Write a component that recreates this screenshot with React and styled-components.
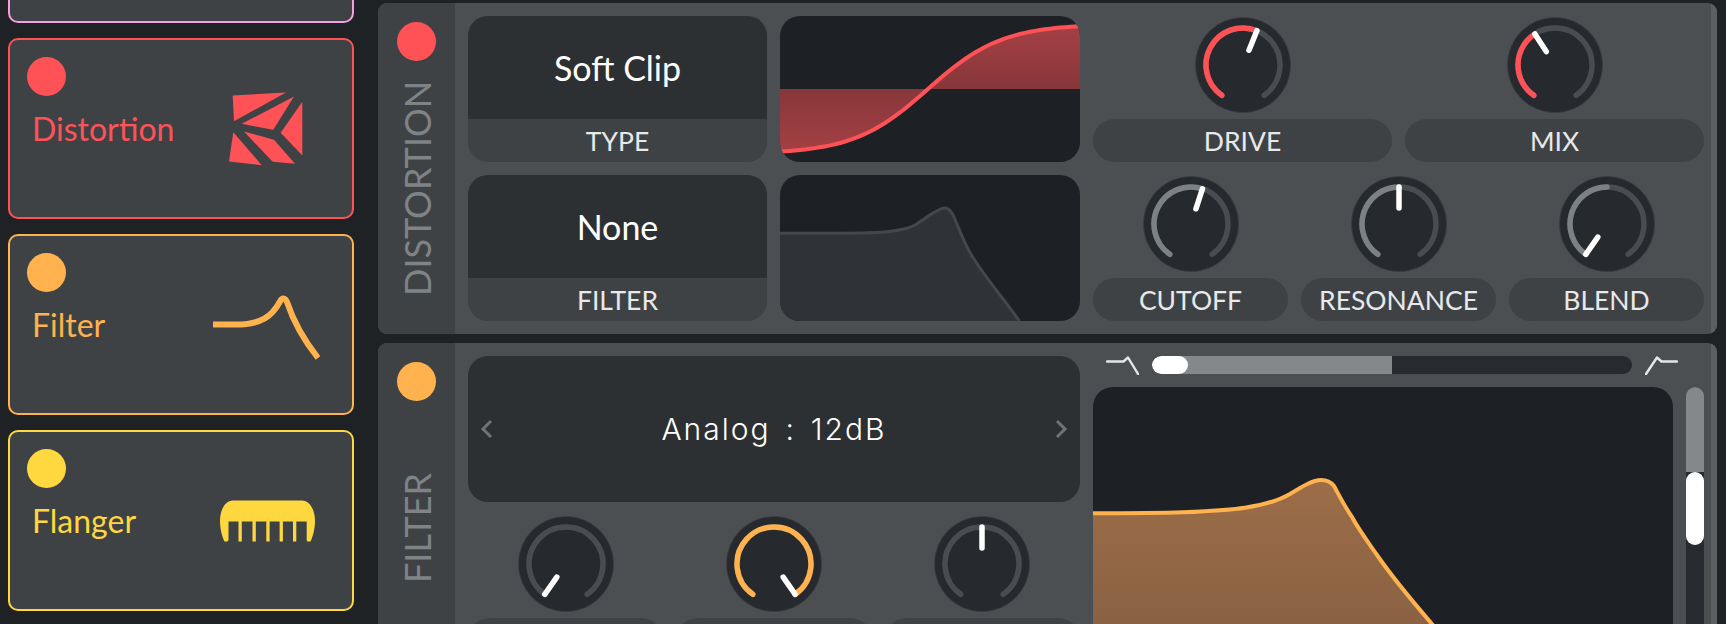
import React from "react";
import styled, { createGlobalStyle } from "styled-components";

const RED = "#ff5257";
const ORANGE = "#ffb24d";
const YELLOW = "#ffd73f";
const PINK = "#f29fe2";

const Global = createGlobalStyle`
  html, body { margin: 0; padding: 0; height: 100%; overflow: hidden; background: #1f2225; }
  #root { height: 100%; }
  * { box-sizing: border-box; }
`;

const Page = styled.div`
  display: flex;
  width: 1726px;
  height: 624px;
  overflow: hidden;
  background: #1f2225;
  font-family: Lato, "Liberation Sans", sans-serif;
  font-weight: 400;
`;

const Sidebar = styled.aside`
  flex: 0 0 378px;
  height: 624px;
  padding: 0 24px 13px 8px;
  display: flex;
  flex-direction: column;
  justify-content: flex-end;
  gap: 15px;
  overflow: hidden;
`;

const EffectCard = styled.div`
  flex: 0 0 181px;
  display: flex;
  border: 2px solid ${(p) => p.$color};
  border-radius: 10px;
  background: #3f4245;
  color: ${(p) => p.$color};
`;

const CardInfo = styled.div`
  flex: 0 0 170px;
  padding: 17px 0 0 17px;
`;

const Dot = styled.div`
  width: 39px;
  height: 39px;
  border-radius: 50%;
  background: ${(p) => p.$color};
`;

const CardName = styled.div`
  margin: 11px 0 0 5px;
  font-size: 32px;
  line-height: 44px;
`;

const CardIcon = styled.div`
  flex: 1;
  display: flex;
  align-items: center;
  justify-content: center;
`;

const Main = styled.main`
  flex: 1;
  padding: 3px 9px 0 0;
  display: flex;
  flex-direction: column;
  gap: 9px;
  min-width: 0;
`;

const Panel = styled.section`
  flex: 0 0 auto;
  display: flex;
  border-radius: 9px;
  overflow: hidden;
  background: #4b4f52;
`;

const Strip = styled.div`
  flex: 0 0 77px;
  background: #3f4245;
  display: flex;
  flex-direction: column;
  align-items: center;
  padding: 19px 0 19px;
`;

const StripTitle = styled.div`
  flex: 1;
  display: flex;
  align-items: center;
  justify-content: center;
  writing-mode: vertical-rl;
  transform: rotate(180deg);
  font-size: 36px;
  line-height: 40px;
  color: #7e8386;
`;

const PanelBody = styled.div`
  flex: 1;
  min-width: 0;
  padding: 13px 6px 13px 13px;
  display: grid;
  grid-template-columns: 612px 611px;
  gap: 13px;
`;

const PanelEdge = styled.div`
  flex: 0 0 6px;
  background: #5b5f62;
`;

const SplitRow = styled.div`
  display: grid;
  grid-template-columns: 299px 300px;
  gap: 13px;
  height: 146px;
`;

const KnobRow = styled.div`
  display: grid;
  grid-template-columns: repeat(${(p) => p.$cols}, minmax(0, 1fr));
  gap: 13px;
  height: 146px;
`;

const Selector = styled.div`
  height: 146px;
  border-radius: 20px;
  overflow: hidden;
  display: flex;
  flex-direction: column;
  background: #3f4245;
`;

const SelectorValue = styled.div`
  flex: 0 0 103px;
  background: #2d3033;
  display: flex;
  align-items: center;
  justify-content: center;
  color: #fff;
  font-size: 34px;
`;

const SelectorLabel = styled.div`
  flex: 1;
  display: flex;
  align-items: center;
  justify-content: center;
  color: #e8e9ea;
  font-size: 26.5px;
`;

const GraphBox = styled.div`
  height: ${(p) => p.$height || "146px"};
  border-radius: 20px;
  overflow: hidden;
  background: #1d2024;
  & > svg { display: block; width: 100%; height: 100%; }
`;

const BrowseBar = styled.div`
  height: 146px;
  border-radius: 20px;
  background: #2d3033;
  display: flex;
  align-items: center;
  justify-content: space-between;
  padding: 0 12px;
`;

const BrowseText = styled.div`
  color: #fff;
  font-family: Inter, sans-serif;
  font-weight: 300;
  font-size: 30px;
  letter-spacing: 2px;
  word-spacing: -3px;
  white-space: pre;
`;

const KnobCell = styled.div`
  display: flex;
  flex-direction: column;
  align-items: center;
  padding-top: 1px;
  gap: 6px;
  min-width: 0;
`;

const KnobSvg = styled.svg`
  display: block;
  flex: 0 0 96px;
`;

const KnobLabel = styled.div`
  align-self: stretch;
  flex: 0 0 43px;
  border-radius: 22px;
  background: #3f4245;
  display: flex;
  align-items: center;
  justify-content: center;
  color: #e8e9ea;
  font-size: 26.5px;
`;

const Column = styled.div`
  display: flex;
  flex-direction: column;
  gap: 13px;
  min-width: 0;
`;

const ToneRow = styled.div`
  display: flex;
  align-items: center;
  gap: 13px;
  height: 18px;
  padding: 0 26px 0 13px;
`;

const HTrack = styled.div`
  flex: 1;
  height: 18px;
  border-radius: 9px;
  overflow: hidden;
  background: #272a2e;
`;

const HFill = styled.div`
  height: 100%;
  background: #84888b;
`;

const HHandle = styled.div`
  width: 36px;
  height: 18px;
  border-radius: 9px;
  background: #fff;
`;

const GraphRow = styled.div`
  display: grid;
  grid-template-columns: 1fr 18px;
  gap: 13px;
`;

const VTrack = styled.div`
  height: 274px;
  border-radius: 9px;
  overflow: hidden;
  background: #272a2e;
`;

const VFill = styled.div`
  height: 85px;
  background: #84888b;
`;

const VHandle = styled.div`
  height: 73px;
  border-radius: 9px;
  background: #fff;
`;

const polar = (r, deg) => {
  const a = (deg * Math.PI) / 180;
  return [48 + r * Math.sin(a), 48 - r * Math.cos(a)];
};

const arc = (from, to, r = 37) => {
  const [x1, y1] = polar(r, from);
  const [x2, y2] = polar(r, to);
  const large = to - from > 180 ? 1 : 0;
  return `M${x1.toFixed(2)} ${y1.toFixed(2)}A${r} ${r} 0 ${large} 1 ${x2.toFixed(2)} ${y2.toFixed(2)}`;
};

function Knob({ angle, from = -145, to, color = "#7c8184", label }) {
  const [ix, iy] = polar(16, angle);
  const [ox, oy] = polar(37, angle);
  return (
    <KnobCell>
      <KnobSvg width="96" height="96" viewBox="0 0 96 96">
        <circle cx="48" cy="48" r="47.6" fill="#26292d" stroke="#3d4043" strokeWidth="0.8" />
        <path d={arc(-145, 145)} fill="none" stroke="#4a4d50" strokeWidth="5.5" strokeLinecap="round" />
        {to !== undefined && (
          <path d={arc(from, to)} fill="none" stroke={color} strokeWidth="5.5" strokeLinecap="round" />
        )}
        <line x1={ix} y1={iy} x2={ox} y2={oy} stroke="#fff" strokeWidth="5.5" strokeLinecap="round" />
      </KnobSvg>
      <KnobLabel>{label}</KnobLabel>
    </KnobCell>
  );
}

const DistortionIcon = () => (
  <svg width="108" height="76" viewBox="0 0 108 76" fill={RED}>
    <polygon points="20.7,4.5 74,1.5 22,30.2" />
    <polygon points="29.7,32.8 82,5.5 61.3,38.8" />
    <polygon points="90.3,10.8 90.3,64.5 68.7,41.8" />
    <polygon points="32,40.5 62,48.8 83,72.8 60.7,70.8" />
    <polygon points="21.3,41.2 49.7,74.2 17,70.5" />
  </svg>
);

const FilterIcon = () => (
  <svg width="108" height="76" viewBox="0 0 108 76" fill="none">
    <path
      d="M1 37.5H24C50 37.5 60 29 68 14.5C70 10.5 73 10.5 75 15C81 33 91 52 106 71"
      stroke={ORANGE}
      strokeWidth="6"
    />
  </svg>
);

const FlangerIcon = () => (
  <svg width="108" height="76" viewBox="0 0 108 76" fill={YELLOW}>
    <path d="M21 17.5H90C98 17.5 103 27.5 103 37.5C103 45.5 101 53.5 98.5 58.5H95.5Q94.7 58.5 94.7 56.5V38.5H16.5V56.5Q16.5 58.5 15 58.5H12.5C10 53.5 8 45.5 8 37.5C8 27.5 13 17.5 21 17.5Z" />
    {[26.5, 40.5, 54.3, 67.6, 81].map((x) => (
      <rect key={x} x={x} y="38" width="3.3" height="20.5" />
    ))}
  </svg>
);

const Chevron = ({ flip }) => (
  <svg width="14" height="20" viewBox="0 0 14 20" fill="none">
    <path d={flip ? "M3 2L11 10L3 18" : "M11 2L3 10L11 18"} stroke="#6f7376" strokeWidth="3" />
  </svg>
);

const LowPassGlyph = () => (
  <svg width="33" height="19" viewBox="0 0 33 19" fill="none">
    <path d="M1 5.5H17.5L22 1.5L32 18" stroke="#e5e6e7" strokeWidth="2.4" strokeLinecap="round" strokeLinejoin="round" />
  </svg>
);

const HighPassGlyph = () => (
  <svg width="33" height="19" viewBox="0 0 33 19" fill="none">
    <path d="M1 18L12 1.5L16.5 5.5H32" stroke="#e5e6e7" strokeWidth="2.4" strokeLinecap="round" strokeLinejoin="round" />
  </svg>
);

const softClip = () => {
  const pts = [];
  for (let x = 0; x <= 300; x += 5) {
    const y = 73 - 65 * Math.tanh(0.0135 * (x - 148));
    pts.push(`${x} ${y.toFixed(2)}`);
  }
  return pts;
};

const ClipGraph = () => {
  const pts = softClip();
  const line = `M${pts.join("L")}`;
  return (
    <GraphBox>
      <svg viewBox="0 0 300 146" preserveAspectRatio="none">
        <defs>
          <linearGradient id="clipFill" x1="0" y1="0" x2="0" y2="1">
            <stop offset="0" stopColor="#a54044" />
            <stop offset="0.5" stopColor="#86373a" />
            <stop offset="1" stopColor="#a54044" />
          </linearGradient>
        </defs>
        <path d={`${line}L300 73L0 73Z`} fill="url(#clipFill)" />
        <path d={line} fill="none" stroke={RED} strokeWidth="4" />
      </svg>
    </GraphBox>
  );
};

const MiniFilterGraph = () => {
  const curve = "M0 58.3C40 58.3 70 58.3 88 57.7C110 57 125 55.5 135 50C147 43 157 33 165 33C169 33 171 36 174 42C180 56 184 68 192 81C207 105 224 124 239.4 146";
  return (
    <GraphBox>
      <svg viewBox="0 0 300 146" preserveAspectRatio="none">
        <path d={`${curve}L0 146Z`} fill="#2f3236" />
        <path d={curve} fill="none" stroke="#45484b" strokeWidth="3" />
      </svg>
    </GraphBox>
  );
};

const BigFilterGraph = () => {
  const curve = "M0 126.3C40 126.3 70 126 90 125.3C120 124 140 122.5 152 120.7C170 118 185 114 197 107C210 99 220 93 228 93C234 93 238 95 241 99C247 110 252 120 259 130C266 143 275 155 284 168C302 194 320 215 339 237L369 274";
  return (
    <GraphBox $height="274px">
      <svg viewBox="0 0 580 274" preserveAspectRatio="none">
        <defs>
          <linearGradient id="bigFill" x1="0" y1="0" x2="0" y2="1">
            <stop offset="0" stopColor="#9c6d48" />
            <stop offset="1" stopColor="#855f42" />
          </linearGradient>
        </defs>
        <path d={`${curve}L0 274Z`} fill="url(#bigFill)" />
        <path d={curve} fill="none" stroke={ORANGE} strokeWidth="4" />
      </svg>
    </GraphBox>
  );
};

export default function App() {
  return (
    <Page>
      <Global />
      <Sidebar>
        <EffectCard $color={PINK} />
        <EffectCard $color={RED}>
          <CardInfo>
            <Dot $color={RED} />
            <CardName>Distortion</CardName>
          </CardInfo>
          <CardIcon><DistortionIcon /></CardIcon>
        </EffectCard>
        <EffectCard $color={ORANGE}>
          <CardInfo>
            <Dot $color={ORANGE} />
            <CardName>Filter</CardName>
          </CardInfo>
          <CardIcon><FilterIcon /></CardIcon>
        </EffectCard>
        <EffectCard $color={YELLOW}>
          <CardInfo>
            <Dot $color={YELLOW} />
            <CardName>Flanger</CardName>
          </CardInfo>
          <CardIcon><FlangerIcon /></CardIcon>
        </EffectCard>
      </Sidebar>
      <Main>
        <Panel>
          <Strip>
            <Dot $color={RED} />
            <StripTitle>DISTORTION</StripTitle>
          </Strip>
          <PanelBody>
            <SplitRow>
              <Selector>
                <SelectorValue>Soft Clip</SelectorValue>
                <SelectorLabel>TYPE</SelectorLabel>
              </Selector>
              <ClipGraph />
            </SplitRow>
            <KnobRow $cols={2}>
              <Knob angle={22} to={22} color={RED} label="DRIVE" />
              <Knob angle={-33} to={-33} color={RED} label="MIX" />
            </KnobRow>
            <SplitRow>
              <Selector>
                <SelectorValue>None</SelectorValue>
                <SelectorLabel>FILTER</SelectorLabel>
              </Selector>
              <MiniFilterGraph />
            </SplitRow>
            <KnobRow $cols={3}>
              <Knob angle={18} to={18} label="CUTOFF" />
              <Knob angle={0} to={0} label="RESONANCE" />
              <Knob angle={-145} to={0} label="BLEND" />
            </KnobRow>
          </PanelBody>
          <PanelEdge />
        </Panel>
        <Panel>
          <Strip>
            <Dot $color={ORANGE} />
            <StripTitle>FILTER</StripTitle>
          </Strip>
          <PanelBody>
            <Column>
              <BrowseBar>
                <Chevron />
                <BrowseText>Analog  :  12dB</BrowseText>
                <Chevron flip />
              </BrowseBar>
              <KnobRow $cols={3}>
                <Knob angle={-145} />
                <Knob angle={145} to={145} color={ORANGE} />
                <Knob angle={0} />
              </KnobRow>
            </Column>
            <Column>
              <ToneRow>
                <LowPassGlyph />
                <HTrack>
                  <HFill style={{ width: "50%" }}>
                    <HHandle />
                  </HFill>
                </HTrack>
                <HighPassGlyph />
              </ToneRow>
              <GraphRow>
                <BigFilterGraph />
                <VTrack>
                  <VFill />
                  <VHandle />
                </VTrack>
              </GraphRow>
            </Column>
          </PanelBody>
          <PanelEdge />
        </Panel>
      </Main>
    </Page>
  );
}
